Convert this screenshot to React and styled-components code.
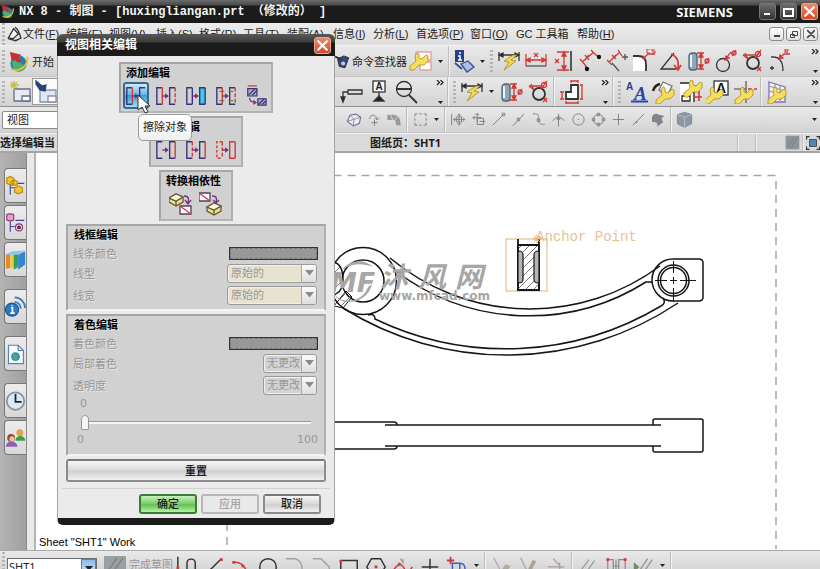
import React from "react";
import styled, { createGlobalStyle, css } from "styled-components";

const Global = createGlobalStyle`
  * { box-sizing: border-box; }
  html, body { margin: 0; padding: 0; }
  body, button, input, select {
    font-family: "Liberation Sans", "Noto Sans CJK SC", sans-serif;
    font-size: 11px;
    color: #222;
  }
  button { border: 0; background: none; padding: 0; }
`;

/* ---------- shell ---------- */

const Shell = styled.div`
  position: relative;
  display: flex;
  flex-direction: column;
  height: 100vh;
  overflow: hidden;
  background: #dcdcdc;
`;

const TitleBar = styled.header`
  flex: none;
  display: flex;
  align-items: center;
  height: 23px;
  padding-right: 2px;
  background: linear-gradient(#6a6a6a 0, #4a4a4a 5px, #1c1c1c 6px, #1a1a1a 100%);
  color: #f4f4f4;
`;

const AppTitle = styled.h1`
  flex: 1;
  margin: 0 0 0 4px;
  font: bold 12px/22px "Liberation Mono", "Noto Sans CJK SC", monospace;
  white-space: pre;
`;

const Brand = styled.span`
  font: bold 13px/22px "Noto Sans", sans-serif;
  margin-right: 22px;
`;

const WindowButton = styled.button`
  display: flex;
  align-items: center;
  justify-content: center;
  width: 17px;
  height: 17px;
  margin-left: 4px;
  border-radius: 3px;
  border: 1px solid ${(p) => (p.$danger ? "#f0a48c" : "#777")};
  background: ${(p) =>
    p.$danger ? "linear-gradient(#ea8a6c, #d24a2a)" : "linear-gradient(#6c6c6c, #343434)"};
  color: #fff;
`;

const MenuBar = styled.nav`
  flex: none;
  display: flex;
  align-items: center;
  height: 23px;
  padding: 0 2px 0 0;
  background: linear-gradient(#ececec, #dedede);
  border-bottom: 1px solid #f4f4f4;
`;

const MenuItem = styled.button`
  width: ${(p) => p.$w}px;
  line-height: 22px;
  text-align: left;
  white-space: nowrap;
`;

const Push = styled.span`
  flex: 1;
`;

const ChildButton = styled.button`
  display: flex;
  align-items: center;
  justify-content: center;
  width: 15px;
  height: 14px;
  margin-left: 2px;
  border: 1px solid #8c8c8c;
  border-radius: 3px;
  background: linear-gradient(#fdfdfd, #e2e2e2);
`;

const Toolbar = styled.div`
  flex: none;
  display: flex;
  align-items: center;
  height: ${(p) => p.$h}px;
  background: linear-gradient(#e9e9e9, #d3d3d3);
  border-bottom: 1px solid ${(p) => (p.$strong ? "#8f8f8f" : "#c6c6c6")};
  overflow: hidden;
`;

const LeadZone = styled.div`
  flex: none;
  display: flex;
  align-items: center;
  width: ${(p) => p.$w}px;
  height: 100%;
`;

const Slot = styled.button`
  flex: none;
  display: flex;
  align-items: center;
  justify-content: center;
  width: ${(p) => p.$w || 27}px;
  height: 27px;
  ${(p) =>
    p.$active &&
    css`
      background: #fbfbfb;
      border: 1px solid #9a9a9a;
    `}
`;

const TextButton = styled.button`
  flex: none;
  display: flex;
  align-items: center;
  gap: 2px;
  white-space: nowrap;
  color: ${(p) => (p.disabled ? "#979797" : "#222")};
`;

const CaretBox = styled.button`
  flex: none;
  display: flex;
  width: 12px;
  justify-content: center;
`;

const Separator = styled.span`
  flex: none;
  width: 2px;
  height: 100%;
  margin: 0 2px;
  border-left: 1px solid #bdbdbd;
  border-right: 1px solid #f2f2f2;
`;

const Grip = styled.span`
  flex: none;
  width: 3px;
  height: 22px;
  margin: 0 2px;
  background: repeating-linear-gradient(#b4b4b4 0 2px, transparent 2px 4px);
`;

const More = styled.button`
  flex: none;
  display: flex;
  flex-direction: column;
  justify-content: space-between;
  align-items: center;
  width: 10px;
  height: 24px;
  margin-left: ${(p) => (p.$end ? "auto" : "16px")};
`;

const InfoBar = styled.div`
  flex: none;
  display: flex;
  align-items: center;
  height: 20px;
  background: #dadada;
  border-top: 1px solid #f2f2f2;
  border-bottom: 2px solid #a4a4a4;
  font: bold 11px/16px "Noto Sans", "Noto Sans CJK SC", sans-serif;
  color: #1c1c1c;
`;

const ViewFilter = styled.select`
  width: 150px;
  height: 18px;
  margin-left: 2px;
  padding: 0;
  border: 1px solid #8a8a8a;
  border-radius: 2px;
  background: #fff;
`;

/* ---------- work area ---------- */

const Work = styled.main`
  flex: 1;
  min-height: 0;
  display: flex;
`;

const ResourceBar = styled.aside`
  flex: none;
  display: flex;
  flex-direction: column;
  width: 27px;
  padding: 15px 0 0 4px;
  background: linear-gradient(90deg, #b4b4b4, #a0a0a0);
  border-right: 1px solid #8a8a8a;
`;

const ResourceTab = styled.button`
  flex: none;
  display: flex;
  align-items: center;
  justify-content: center;
  height: 35px;
  margin-bottom: ${(p) => (p.$apart ? 12 : 2)}px;
  border: 1px solid #777;
  border-right: 0;
  border-radius: 4px 0 0 4px;
  background: linear-gradient(#ececec, #d8d8d8);
`;

const Gutter = styled.div`
  flex: none;
  width: 9px;
  background: #e9e9e9;
  border-right: 2px solid #b4b4b4;
`;

const Sheet = styled.section`
  position: relative;
  flex: 1;
  min-width: 0;
  overflow: hidden;
  background: #fff;
`;

const Drawing = styled.svg`
  display: block;
  width: 784px;
  height: 396px;
`;

const SheetLabel = styled.span`
  position: absolute;
  left: 3px;
  bottom: 1px;
  line-height: 14px;
  color: #000;
`;

const BottomBar = styled.footer`
  flex: none;
  display: flex;
  align-items: flex-start;
  height: 19px;
  padding-top: 1px;
  overflow: hidden;
  background: linear-gradient(#e9e9e9, #d6d6d6);
  border-top: 1px solid #a8a8a8;
`;

const SheetPicker = styled.label`
  flex: none;
  display: flex;
  width: 90px;
  height: 20px;
  margin: 6px 6px 0 0;
  border: 1px solid #6d6d6d;
  background: #fff;
`;

const SheetInput = styled.input`
  flex: 1;
  min-width: 0;
  border: 0;
  padding: 0 0 4px 1px;
  font: 11px "Noto Sans", sans-serif;
`;

const SheetArrow = styled.span`
  width: 15px;
  padding: 6px 0 0 3px;
  border: 1px solid #5784b8;
  background: linear-gradient(#8dbbe8, #d4ecfc);
  display: flex;
`;

/* ---------- dialog ---------- */

const Dialog = styled.section`
  position: absolute;
  left: 57px;
  top: 34px;
  width: 278px;
  border: 1px solid #a2a2a2;
  border-width: 0 1px;
  border-radius: 6px;
  background: #ebebeb;
  border-bottom: 7px solid #1c1c1c;
`;

const DialogHead = styled.header`
  display: flex;
  align-items: center;
  justify-content: space-between;
  height: 22px;
  margin: 0 -1px;
  padding: 0 4px 0 8px;
  border-radius: 6px 6px 0 0;
  background: linear-gradient(#585858, #3c3c3c 8px, #1b1b1b 9px);
`;

const DialogTitle = styled.h2`
  margin: 0;
  font-size: 12px;
  line-height: 20px;
  color: #fff;
`;

const DialogBody = styled.div`
  display: flex;
  flex-direction: column;
  align-items: center;
  gap: 3px;
  padding: 6px 8px 6px;
`;

const sunken = css`
  background: #d1d1d1;
  border: 2px solid;
  border-color: #a6a6a6 #b0b0b0 #b4b4b4 #a6a6a6;
`;

const ToolGroup = styled.fieldset`
  position: relative;
  margin: 0;
  min-width: ${(p) => p.$min || 0}px;
  height: 51px;
  padding: 0 2px;
  ${sunken}
`;

const GroupTitle = styled.h3`
  margin: 0;
  padding-left: ${(p) => p.$inset || 3}px;
  font-size: 11px;
  line-height: 18px;
  color: #000;
`;

const ToolRow = styled.div`
  display: flex;
  gap: 4px;
  justify-content: center;
`;

const EditTool = styled.button`
  display: flex;
  align-items: center;
  justify-content: center;
  width: 26px;
  height: 27px;
  border-radius: 3px;
  ${(p) =>
    p.$active &&
    css`
      border: 2px solid #36698f;
      background: linear-gradient(#d0e9f8, #6db8e4 45%, #3f9bd4 50%, #9be0fa);
    `}
`;

const Tooltip = styled.span`
  position: absolute;
  left: 17px;
  top: 50px;
  z-index: 2;
  padding: 0 4px;
  border: 1px solid #9c9c9c;
  border-radius: 5px;
  background: linear-gradient(#fff, #f0f0f0);
  line-height: 25px;
  white-space: nowrap;
`;

const Pointer = styled.svg`
  position: absolute;
  left: 16px;
  top: 30px;
  z-index: 3;
`;

const Panel = styled.fieldset`
  align-self: stretch;
  margin: 0;
  min-width: 0;
  padding: 0 6px ${(p) => p.$pb}px 5px;
  ${sunken}
  border-bottom-color: #f4f4f4;
`;

const PanelRow = styled.div`
  display: flex;
  align-items: center;
  justify-content: space-between;
  height: ${(p) => p.$h || 22}px;
  color: #979797;
  text-shadow: 1px 1px 0 #e4e4e4;
`;

const Swatch = styled.button`
  width: 89px;
  height: 13px;
  border: 1px solid #333;
  background: #989898;
  outline: 1px dashed #777;
  outline-offset: -2px;
`;

const Combo = styled.span`
  position: relative;
  display: flex;
  width: ${(p) => p.$w}px;
  height: 19px;
  margin-right: 1px;
  border: 1px solid #9a9a9a;
  border-radius: 3px;
  background: ${(p) => (p.$w > 60 ? "#e8e3d0" : "#d3d3d3")};
  box-shadow: inset 0 0 0 1px #efefef;
`;

const ComboSelect = styled.select`
  flex: 1;
  min-width: 0;
  appearance: none;
  border: 0;
  background: none;
  padding: 0 0 0 3px;
  color: #979797;
  opacity: 1;
`;

const ComboArrow = styled.span`
  display: flex;
  align-items: center;
  justify-content: center;
  width: 15px;
  border-left: 1px solid #aaa;
  border-radius: 0 2px 2px 0;
  background: linear-gradient(#fafafa, #dedede);
`;

const ScaleRow = styled.div`
  display: flex;
  justify-content: space-between;
  height: 16px;
  padding: 0 0 0 ${(p) => p.$inset}px;
  font: 11px/16px "DejaVu Sans", sans-serif;
  color: #979797;
`;

const Slider = styled.input`
  display: block;
  width: 230px;
  height: 20px;
  margin: 0 0 0 8px;
  appearance: none;
  background: linear-gradient(transparent 9px, #999 9px 10px, #f6f6f6 10px 12px, transparent 12px);
  &::-webkit-slider-thumb {
    appearance: none;
    width: 8px;
    height: 15px;
    border: 1px solid #999;
    border-radius: 4px 4px 1px 1px;
    background: #f6f6f6;
  }
`;

const PushButton = styled.button`
  width: ${(p) => (p.$wide ? "100%" : "58px")};
  height: ${(p) => (p.$wide ? 23 : 20)}px;
  border: 2px solid #8c8c8c;
  border-color: #777 #8c8c8c #8c8c8c;
  border-radius: 3px;
  background: linear-gradient(#f6f6f6, #dcdcdc 45%, #d0d0d0 55%, #f0f0f0);
  color: #222;
  font-weight: ${(p) => (p.$wide ? "bold" : "500")};
  line-height: 14px;
  ${(p) =>
    p.$primary &&
    css`
      border-color: #3c7a35;
      background: linear-gradient(#c8f0bc, #7fd070 45%, #62c052 55%, #b4f4a4);
    `}
  &:disabled {
    border-color: #b8b8b8;
    color: #a4a4a4;
    background: #e9e9e9;
  }
`;

const DialogFoot = styled.footer`
  display: flex;
  justify-content: flex-end;
  gap: 4px;
  margin: 0 4px;
  padding: 5px 9px 4px 0;
  border-top: 1px solid #d2d2d2;
`;

/* ---------- icons ---------- */

const RED = "#d03a36";
const BLUE = "#35357e";

const Ico = ({ s = 24, children, ...rest }) => (
  <svg width={s} height={s} viewBox="0 0 24 24" fill="none" stroke="#333" strokeWidth="1.3" {...rest}>
    {children}
  </svg>
);

const Caret = ({ c = "#222", w = 5 }) => (
  <svg width={w} height={w * 0.6} viewBox="0 0 10 6"><path d="M0 0h10L5 6z" fill={c} /></svg>
);

const CaretButton = () => <CaretBox aria-label="更多"><Caret /></CaretBox>;

const MoreTools = ({ end }) => (
  <More $end={end} aria-label="更多工具">
    <svg width="8" height="6" viewBox="0 0 8 6" fill="none" stroke="#222" strokeWidth="1.2"><path d="M1 0l2.500 2.500L1 5M4.500 0L7 2.500 4.500 5" /></svg>
    <Caret />
  </More>
);

const Wrench = ({ x = 0, y = 0 }) => (
  <path
    transform={`translate(${x} ${y})`}
    d="M0 14l6-5-1-5 2-3 2 1v4l3 1 4-4 2 1v5l-4 4H9l-5 5H0z"
    fill="#f4de5c" stroke="#a68a2c" strokeWidth="0.8"
  />
);

const NxLogo = ({ s = 24 }) => (
  <Ico s={s} stroke="none">
    <circle cx="12" cy="14" r="8.500" fill="#2b7fae" />
    <path d="M5 12c4-2 9 0 14 7-3 4-9 5-12 1z" fill="#4cb070" />
    <path d="M4 20C14 24 23 15 21 7" stroke="#e9bf38" strokeWidth="2" fill="none" />
    <path d="M3 2l12 3-3 2 3 5-4 1-3-4-3 3z" fill="#c9302c" />
  </Ico>
);

const Bolt = () => (
  <Ico>
    <path d="M2 3v9M22 3v9M2 6h20" />
    <path d="M2 6l4-2v4zM22 6l-4-2v4z" fill="#222" />
    <path d="M16 6L7 12l5 1-5 8 12-9-5-1 6-5z" fill="#f4dc4e" stroke="#a08828" strokeWidth="0.800" />
  </Ico>
);

const HDim = () => (
  <Ico stroke={RED}>
    <path d="M2 5v12M22 5v12M2 11h20M10 4l4 4M14 4l-4 4" />
    <path d="M2 11l4-2v4zM22 11l-4-2v4z" fill={RED} />
    <path d="M2 17h20" stroke="#555" />
  </Ico>
);

const VDim = () => (
  <Ico stroke={RED}>
    <path d="M6 3h12M6 21h12M13 3v18M4 10l4 4M8 10l-4 4" />
    <path d="M13 3l-2 4h4zM13 21l-2-4h4z" fill={RED} />
    <path d="M20 2v20" stroke="#555" strokeWidth="2" />
  </Ico>
);

const ParallelDim = () => (
  <Ico stroke={RED}>
    <path d="M4 13L16 3M2 10l6 7M13 1l6 6M7 6l4 5M11 6l-4 5" />
    <path d="M8 17v4M19 7h2" stroke="#333" />
    <circle cx="9" cy="20" r="1.500" fill="#111" stroke="#111" /><circle cx="21" cy="8" r="1.500" fill="#111" stroke="#111" />
  </Ico>
);

const PerpDim = () => (
  <Ico stroke={RED}>
    <path d="M4 13L15 3M2 11l5 5M13 1l4 6M7 6l4 4M11 6l-4 4" />
    <path d="M20 5v6M17 8h6M7 14l7 8" stroke="#555" />
  </Ico>
);

const ChamferDim = () => (
  <Ico>
    <path d="M1 7h7c4 1 6 4 6 8v7H1z" fill="#fff" stroke="none" />
    <path d="M1 7h5c5 0 8 3 8 8v7" strokeWidth="1.800" />
    <path d="M11 10l5-5h7" stroke={RED} /><path d="M10 10l1-4 3 3z" fill={RED} stroke="none" />
    <path d="M18 0h-3v4h3M23 0h-3v2h3v2h-3" stroke={RED} strokeWidth="1" />
  </Ico>
);

const AngleDim = () => (
  <Ico><path d="M15 4L2 20h15" /><path d="M12 5c6 2 8 8 7 15M15 16l4 5 3-5" stroke={RED} strokeWidth="1.600" /></Ico>
);

const CylinderDim = () => (
  <Ico>
    <rect x="3" y="4" width="8" height="17" rx="3" fill="#8ca8b8" stroke="#4d6576" />
    <path d="M5 6v12" stroke="#e8f4fa" strokeWidth="2" />
    <g stroke={RED}><path d="M11 4h7M11 20h7M15 4v16" /><path d="M15 4l-2 4h4zM15 20l-2-4h4z" fill={RED} /><circle cx="21" cy="12" r="2" /><path d="M19 15l4-6" /></g>
  </Ico>
);

const HoleDim = () => (
  <Ico><circle cx="10" cy="16" r="6.500" /><g stroke={RED}><path d="M13 10l4-6h3M12 11l1-4 3 2z" /><circle cx="21" cy="4" r="2" /><path d="M19 7l4-6" /></g></Ico>
);

const DiameterDim = () => (
  <Ico><circle cx="13" cy="14" r="6" strokeWidth="1.800" /><g stroke={RED}><path d="M3 6h12M3 6l5 4M18 18l3 4M5 4l3 6M17 22l4-4" /><circle cx="18" cy="5" r="2.500" /><path d="M15 9l6-8" /></g></Ico>
);

const RadiusDim = () => (
  <Ico><path d="M4 8c8-1 12 4 12 14M3 19h4M5 17v4" /><path d="M12 10l5-5h6M12 10l1-4 3 3z" stroke={RED} /><path d="M18 4V0h3v2h-3l3 2" stroke={RED} strokeWidth="1" /></Ico>
);

const FormatTool = () => (
  <Ico><rect x="7" y="3" width="15" height="8" fill="#fff" stroke="#e59a96" /><rect x="11" y="13" width="11" height="8" fill="#fff" stroke="#e59a96" /><Wrench x="1" y="3" /></Ico>
);

const InfoTool = () => (
  <Ico><rect x="3" y="1" width="9" height="12" fill="#283f8e" stroke="none" /><path d="M7 4h2M6 7h2v4M6 11h4" stroke="#fff" strokeWidth="1.500" /><path d="M9 15l7-3 6 6-7 5z" fill="#a9bfe4" stroke="#3b4e8c" /><path d="M3 14l7 6" stroke="#3b4e8c" strokeWidth="2" /></Ico>
);

const Finder = () => (
  <Ico s={15}><path d="M4 8l10-5 8 3-6 16-9-2z" fill="#35447c" stroke="#222" /><circle cx="13" cy="15" r="4" fill="#b8cce8" /><path d="M0 4l9 4" stroke="#222" strokeWidth="3" /></Ico>
);

const Leader = () => <Ico><path d="M3 20v-8h5M8 10h14v4H8z" /><path d="M3 22l-2-5h4z" fill="#222" /></Ico>;

const Datum = () => (
  <Ico><rect x="6" y="1" width="12" height="11" fill="#f8f8f8" /><path d="M12 12v7" /><path d="M7 21l5-5 5 5z" fill="#222" /><text x="8.500" y="10" fontSize="10" fontWeight="bold" fill="#222" stroke="none">A</text></Ico>
);

const Lens = () => <Ico><circle cx="10" cy="9" r="7.500" /><path d="M3 9h14M15 15l8 8" strokeWidth="1.800" /></Ico>;

const Outline = () => (
  <Ico><path d="M7 19v-7h5V5h7v14z" fill="#fff" strokeWidth="1.800" /><path d="M12 1h7M12 0v3M19 0v3M23 5v14M21 5h3M21 19h3M7 23h12M7 21v3M19 21v3M3 12v7M1 12h4M1 19h4" stroke={RED} /></Ico>
);

const TextStyle = () => (
  <Ico><text x="1" y="10" fontSize="10" fontWeight="bold" fill="#343a84" stroke="none">A</text><text x="9" y="20" fontSize="19" fontWeight="bold" fontStyle="italic" fontFamily="Liberation Serif" fill="#2247b0" stroke="none">A</text><path d="M6 21.500h17" stroke="#2247b0" strokeWidth="2" /></Ico>
);

const EditAnnot = () => <Ico><path d="M7 10l4-8 9 4-5 10z" fill="#f8f8f8" stroke="#777" /><path d="M1 11c1-4 3-6 7-7" strokeWidth="2.500" stroke="#222" /><Wrench x="4" y="6" /></Ico>;
const EditDim = () => <Ico><rect x="1" y="3" width="13" height="19" fill="#fff" stroke="none" /><path d="M1 3h12M3 16h8v5H3zM15 12v10" stroke="#222" /><path d="M15 6h8M15 17h8M20 3v18" stroke={RED} strokeWidth="1.600" /><Wrench x="5" y="-1" /></Ico>;
const EditText = () => <Ico><rect x="8" y="1" width="14" height="14" fill="#fff" /><text x="10" y="13" fontSize="14" fontWeight="bold" fill="#111" stroke="none">A</text><Wrench x="-1" y="6" /></Ico>;
const EditAxis = () => <Ico><path d="M13 1v22M1 9h13" stroke="#777" strokeWidth="1.600" /><path d="M15 9h4M21 9h3" stroke={RED} /><Wrench x="2" y="6" /></Ico>;
const EditHatch = () => <Ico><path d="M3 2l16 5v15H3z" fill="#f2f2f2" stroke="#8a6cb8" /><path d="M3 6l16 5M3 11l16 5M9 4v18M14 5v16" stroke="#999" /><Wrench x="2" y="6" /></Ico>;

const SheetNew = () => <Ico><path d="M6 9h16v12H6z" fill="#e8ebf3" stroke="#686c88" /><path d="M14 16h8v5h-8z" fill="#fff" stroke="#686c88" /><path d="M6 1v9M2 5h9M3 2l6 6M9 2l-6 6" stroke="#c4be4c" /></Ico>;
const Torch = () => <Ico><path d="M6 10h16v12H6z" fill="#dfe6f4" stroke="#8c90ac" /><path d="M14 16h8v6h-8z" fill="#fff" stroke="#8c90ac" /><path d="M2 1l6 5 4-1-1 6-5-1-4-6z" fill="#29427c" stroke="#29427c" /></Ico>;
const Sketcher = () => <Ico s={16}><path d="M2 18l8-14 7 8-8 7z" fill="#f4f4f4" strokeWidth="2" /><path d="M12 2c5 2 6 8 9 16l-8 4-11-3" strokeWidth="2" /></Ico>;

/* stroke-only glyphs used by the snap toolbar */
const GLYPHS = {
  sphere: "M3 12a8 8 0 0 0 9 7M12 5v14M3 12h9",
  rotate: "M4 11c2-8 10-8 12 0M13 9l3 4 4-4M12 12v10M7 17h10",
  bend: "M2 4h10c7 1 8 7 8 14h-6c0-5-1-7-4-7H2zM8 4v7M12 11l4-5",
  marquee: "M3 3h4M10 3h4M17 3h4M3 21h4M10 21h4M17 21h4M3 3v4M3 10v4M3 17v4M21 3v4M21 10v4M21 17v4",
  move: "M13 3v18M4 12h18M10 6l3-3 3 3M10 18l3 3 3-3M7 9l-3 3 3 3M19 9l3 3-3 3M9 8h8v8H9zM1 3v18",
  turn: "M10 2v14M3 9h14M10 10h10v10H10zM7 5l3-3 3 3M6 6L3 9l3 3M14 15h9",
  end: "M3 21L20 4M18 2h4v4h-4z",
  mid: "M3 22L21 3M10 10h4v4h-4z",
  curve: "M3 3c12-1 8 4 9 10s4 7 10 7M10 11h4v4h-4z",
  cross: "M3 14c4-7 14-7 18 0M12 3v20M10 8h4v4h-4z",
  center: "M3 12a9 9 0 1 0 18 0a9 9 0 1 0-18 0M11 12h2",
  quad: "M4 12a8 8 0 1 0 16 0a8 8 0 1 0-16 0M10 2h4v4h-4zM10 18h4v4h-4zM2 10h4v4H2zM18 10h4v4h-4z",
  plus: "M12 3v18M3 12h18",
  slash: "M3 21L21 3M7 17l4-1",
};
const Glyph = ({ n, s = 15, c = "#858585" }) => <Ico s={s} stroke={c} strokeWidth="1.600"><path d={GLYPHS[n]} /></Ico>;
const SNAP = ["move", "turn", "end", "mid", "curve", "cross", "center", "quad", "plus", "slash"];

const Face = () => <Ico s={16} stroke="none"><path d="M3 8c2-6 7-6 10-4l9 2c-6 3-5 6-2 9l-9 7c1-5-1-7-8-7z" fill="#80868c" /></Ico>;
const Solid = () => <Ico s={17}><path d="M2 5l10-3 10 3v13l-10 5-10-5z" fill="#8c98a4" stroke="#7a8692" /><path d="M2 5l10 4 10-4M12 9v14" stroke="#b8c2cc" /></Ico>;
const Gem = () => <Ico s={16}><path d="M2 14l4-9 9-2 7 5-2 9-9 4z" fill="#ececf6" stroke="#6a6e96" strokeWidth="1.600" /><path d="M2 14l10-3 10-3M12 11l-1 10M6 5l6 6" stroke="#9a7a98" /></Ico>;
const Bend = () => <Ico s={16} stroke="none"><path d="M2 4h10c7 1 10 6 10 16h-7c0-6-1-8-4-8H2z" fill="#999" /><path d="M7 4l3 8M13 12l6-6" stroke="#ddd" /></Ico>;

const Pair = ({ l = BLUE, lr = BLUE, r = BLUE, rr = BLUE, ld, rd, lopen, ropen, fill, ticks }) => (
  <Ico s={22} strokeWidth="1.500">
    <path d="M8 3H2v18h6" stroke={l} strokeDasharray={ld === "all" ? "3 2" : undefined} />
    {!lopen && <path d="M8 3v18" stroke={lr} strokeDasharray={ld ? "4 2" : undefined} />}
    <path d="M22 3h-6v18h6" stroke={r} fill={fill || "none"} />
    {!ropen && <path d="M22 3v18" stroke={rr} strokeDasharray={rd ? "4 2" : undefined} />}
    <path d="M8 12h6" stroke="#7b2d80" /><path d="M11 9l4 3-4 3z" fill="#7b2d80" stroke="none" />
    {ticks && <path d="M5 7h5M5 17h5M17 7h3M17 17h3" stroke="#6d7a44" />}
  </Ico>
);

const SectionEdit = () => (
  <Ico s={22}><path d="M3 1h10" stroke={RED} /><path d="M3 4h10v8H3z" fill="#aaa9bd" stroke={BLUE} /><path d="M4 11l7-7M8 11l5-5" stroke={BLUE} /><path d="M14 15h9v7h-9z" fill="#aaa9bd" stroke={BLUE} /><path d="M15 21l6-6M19 21l4-4" stroke={BLUE} /><path d="M5 14c0 4 2 5 6 5M9 17l3 2-3 2" stroke="#7b2d80" /></Ico>
);

const Block = ({ x, y }) => (
  <g transform={`translate(${x} ${y})`} stroke="#665b30"><path d="M0 4l7-4 7 3v5l-7 4-7-4z" fill="#e8dd8a" /><path d="M0 4l7 3 7-4M7 7v5" /><path d="M0 4l7-4 7 3-7 4z" fill="#fbf8e4" /></g>
);
const Flat = ({ x, y }) => <g transform={`translate(${x} ${y})`}><path d="M0 0h11v8H0z" fill="#fff" stroke="#504058" /><path d="M0 0l11 8" stroke={RED} /></g>;
const ModelToView = () => <Ico><Block x={0} y={2} /><Flat x={11} y={14} /><path d="M15 4c5 0 5 3 4 7M16 8l3 4 3-4" stroke="#7b2d80" /></Ico>;
const ViewToModel = () => <Ico><Flat x={0} y={1} /><Block x={8} y={11} /><path d="M13 4c5 0 5 3 4 6M14 8l3 3 3-3" stroke="#7b2d80" /></Ico>;

const Tree = () => <Ico s={22}><path d="M6 10v12M6 14h5M12 9h10" stroke="#43439a" /><path d="M2 3l4-2 4 2v6l-4 2-4-2zM11 14l5-2 4 2v5l-5 2-4-2zM7 7l4-2 3 2v4H7z" fill="#f0c330" stroke="#b98a1c" /></Ico>;
const Parts = () => <Ico s={22}><path d="M6 10v12M6 16h5M12 9h10" stroke="#43439a" /><path d="M2 3c0-2 8-2 8 0v5c0 2-8 2-8 0z" fill="#d9a7cc" stroke="#9a2f7c" /><circle cx="16" cy="17" r="4" stroke="#9a2f7c" /><circle cx="16" cy="17" r="1.500" fill="#9a2f7c" /></Ico>;
const Books = () => <Ico s={22} stroke="none"><path d="M1 6l5-3v18l-5 1z" fill="#e8862c" /><path d="M6 5l5-3v18l-5 2z" fill="#f0c848" /><path d="M10 6l5-3v17l-5 3z" fill="#32a052" /><path d="M15 6l8-4v15l-8 6z" fill="#3286d0" /><path d="M1 6l7-4 15-1-8 5z" fill="#8cc8ec" /></Ico>;
const Web = () => <Ico s={22}><circle cx="8" cy="15" r="7.500" fill="#2c7cc0" stroke="#195890" /><path d="M8 10v1M7 13h1.500v6M6 19h5" stroke="#fff" strokeWidth="2" /><path d="M11 6c4 0 7 4 7 8M11 1c7 0 12 6 12 12" stroke="#3a78b4" strokeWidth="2" /></Ico>;
const Page = () => <Ico s={22}><path d="M4 2h11l6 6v15H4z" fill="#f8fafc" stroke="#5484b0" /><path d="M15 2v6h6" stroke="#5484b0" /><circle cx="12" cy="15" r="5" fill="#368cb8" stroke="none" /><path d="M9 12l5 1-1 6-3-2z" fill="#54b068" stroke="none" /></Ico>;
const Clock = () => <Ico s={22}><circle cx="12" cy="12" r="10" fill="#dce8f4" stroke="#8a929c" strokeWidth="2" /><path d="M12 4v9h7" stroke="#222" strokeWidth="2" /></Ico>;
const People = () => <Ico s={22} stroke="none"><path d="M12 15c0-7 11-7 11 0z" fill="#3a9a4c" /><circle cx="17" cy="6" r="4" fill="#e3a444" /><path d="M1 22c0-8 13-8 13 0z" fill="#8a60b8" /><circle cx="7" cy="12" r="4.500" fill="#8a4c3c" /><circle cx="8" cy="13" r="3" fill="#f0bf90" /></Ico>;

const CloseX = ({ s = 11, c = "#fff", w = 2 }) => (
  <svg width={s} height={s} viewBox="0 0 12 12"><path d="M2 2l8 8M10 2l-8 8" stroke={c} strokeWidth={w} strokeLinecap="round" /></svg>
);

const Node = ({ x, y }) => <rect x={x - 1.5} y={y - 1.5} width="3" height="3" fill={RED} stroke="none" />;
const SK = {
  profile: <><path d="M2 2v20M12 20V9c0-6 9-6 9 0v11" strokeWidth="1.600" /><Node x={2} y={14} /><Node x={12} y={20} /><Node x={21} y={20} /></>,
  line: <><path d="M2 22L20 4" strokeWidth="1.600" /><Node x={20} y={5} /></>,
  arc: <><path d="M4 8c7-1 12 3 15 12" stroke={RED} strokeWidth="1.600" /><Node x={4} y={8} /><Node x={14} y={12} /></>,
  circle: <circle cx="12" cy="13" r="9" strokeWidth="1.600" />,
  fillet: <path d="M2 4h9c8 1 9 7 9 18" stroke="#a4a4a4" strokeWidth="1.600" />,
  chamfer: <path d="M2 4h9l9 9v9" stroke="#a4a4a4" strokeWidth="1.600" />,
  rect: <><path d="M3 6h18v14H3z" strokeWidth="1.600" /><Node x={3} y={7} /></>,
  hex: <><path d="M7 4h10l5 9-5 9H7l-5-9z" strokeWidth="1.600" /><Node x={12} y={13} /></>,
  spline: <><path d="M2 16c6-9 10-5 12 0s6 1 8-3" stroke={RED} strokeWidth="1.600" /><path d="M9 4l3 4M12 4v6" stroke="#999" /><Node x={8} y={10} /></>,
  point: <path d="M12 4v18M3 13h18" strokeWidth="1.600" />,
  add: <><path d="M5 2v8M1 6h8" stroke={RED} strokeWidth="2" /><path d="M7 9h8v10H7zM15 9c5 0 6 3 6 11" stroke="#3c62b8" strokeWidth="1.600" /></>,
  trim: <><path d="M3 3l9 17" stroke="#aaa" /><path d="M11 17l5-7 5 2-5 9z" fill="#b0aa9c" stroke="none" /></>,
  extend: <><path d="M3 3l8 17" stroke="#aaa" strokeWidth="1.600" /><path d="M11 20l7-14" stroke="#aaa494" strokeWidth="4" /></>,
  corner: <path d="M3 13h18M9 4l9 10M16 8v14" stroke="#b09c9c" />,
  parallel: <path d="M3 17l9-12M9 19l9-13M18 16v6" stroke="#999" />,
  auto: <><path d="M3 5h6v13M3 5v17M15 18V5h7v17M9 12h6M12 5v12" stroke="#888" /><Node x={3} y={5} /><Node x={22} y={5} /></>,
  show: <><path d="M2 8l6 5-6 6z" fill="#6c8c6c" stroke="none" /><path d="M9 16l8-12M14 17l8-12" stroke="#999" strokeWidth="1.600" /></>,
};
const Sk = ({ n }) => <Slot aria-label={n}><Ico s={22}>{SK[n]}</Ico></Slot>;

/* ---------- data ---------- */

const MENUS = [
  ["文件", "F", 43], ["编辑", "E", 43], ["视图", "V", 47], ["插入", "S", 43], ["格式", "R", 44],
  ["工具", "T", 44], ["装配", "A", 46], ["信息", "I", 40], ["分析", "L", 43], ["首选项", "P", 54],
  ["窗口", "O", 46], ["GC 工具箱", "", 61], ["帮助", "H", 40],
];

const ROW1 = [Bolt, HDim, VDim, ParallelDim, PerpDim, ChamferDim, AngleDim, CylinderDim, HoleDim, DiameterDim, RadiusDim];
const ROW2 = [TextStyle, EditAnnot, EditDim, EditText, EditAxis];
const TABS = [[Tree], [Parts], [Books, true], [Web, true], [Page, true], [Clock], [People]];

const tools = (list) => list.map((I, i) => <Slot key={i}><I /></Slot>);

const ComboBox = ({ id, value, w }) => (
  <Combo $w={w}>
    <ComboSelect id={id} disabled defaultValue={value}><option>{value}</option></ComboSelect>
    <ComboArrow><Caret c="#8a8a8a" w={9} /></ComboArrow>
  </Combo>
);

/* ---------- part drawing ---------- */

const PartDrawing = () => (
  <Drawing viewBox="36 154 784 396" fill="none" stroke="#161616" strokeWidth="1.500">
    <defs>
      <pattern id="hatch" width="8" height="8" patternUnits="userSpaceOnUse">
        <path d="M-2 10L10-2M-2 2L2-2M6 10l4-4" stroke="#777" strokeWidth="1" />
      </pattern>
    </defs>
    <path d="M227 560V176.500H776V560" stroke="#a6a6a6" strokeDasharray="8 6" />

    <circle cx="363" cy="282" r="33.500" />
    <circle cx="363" cy="282" r="21" />
    <path d="M330 262c9 1 13 7 13 18s-4 14-13 18z" fill="url(#hatch)" />
    <path d="M334 307l12-15 6 6-9 11z" fill="url(#hatch)" strokeWidth="1" />
    <path d="M390 259A218 218 0 0 0 660 267M397 273A220 220 0 0 0 646 283h7" />
    <path d="M368 316c6-2 7 2 7 4A302 302 0 0 0 661 307c4-2 4-5 2-8M343 309A308 308 0 0 0 678 304" />
    <path d="M673 260h26q4 0 4 4v34q0 4-4 4h-26A21 21 0 0 1 673 260z" />
    <circle cx="673.500" cy="281.500" r="15.500" /><circle cx="673.500" cy="281.500" r="13" />
    <path d="M655 281.500h12M670 281.500h7M680 281.500h16M673.500 262v12M673.500 278v7M673.500 289v14" strokeWidth="1" />

    <path d="M330 423h64q3 0 3 3M330 450h64q3 0 3-3M385 426h276M385 447h276" />
    <path d="M653 426v-4q0-2 2-2h46q2 0 2 2v29q0 2-2 2h-46q-2 0-2-2v-4" />

    <rect x="506" y="240" width="41" height="52" stroke="#e6b277" strokeWidth="1" />
    <path d="M518 246h21v45h-21z" fill="url(#hatch)" />
    <path d="M518 240v51h21v-51M518 246h21" strokeWidth="1.800" />
    <path d="M518 252c4 0 5 1 5 4v24c0 3-1 4-5 4zM539 252c-4 0-5 1-5 4v24c0 3 1 4 5 4z" fill="#b4b4b4" strokeWidth="1.200" />
    <path d="M533 240h9M537 236v8M534 237l6 6M540 237l-6 6" stroke="#eaa95c" strokeWidth="1" />
    <text x="536" y="242" fontFamily="Liberation Mono" fontSize="14" fill="#e2c394" stroke="none">Anchor Point</text>

    <g fill="#a6a6a6" stroke="none">
      <text x="330" y="293" fontFamily="DejaVu Sans" fontSize="27" fontWeight="bold" fontStyle="italic">MF</text>
      <path d="M334 294c8 13 29 9 34-6l4-3c-4 20-33 24-38 9z" />
      <path d="M342 271c7-10 22-12 31-3-11-4-20-4-31 3z" />
      <text x="380 418 455" y="288" fontFamily="Noto Sans CJK SC" fontSize="28" fontWeight="bold" fontStyle="italic">沐风网</text>
      <text x="379" y="301" fontFamily="DejaVu Sans" fontSize="12" fontWeight="bold">www.mfcad.com</text>
    </g>
  </Drawing>
);

/* ---------- dialog ---------- */

const EditDialog = () => (
  <Dialog role="dialog" aria-labelledby="dlg-title">
    <DialogHead>
      <DialogTitle id="dlg-title">视图相关编辑</DialogTitle>
      <WindowButton $danger aria-label="关闭"><CloseX s={13} /></WindowButton>
    </DialogHead>
    <DialogBody>
      <ToolGroup>
        <GroupTitle>添加编辑</GroupTitle>
        <ToolRow>
          <EditTool $active aria-label="擦除对象"><Pair lr={RED} ropen /></EditTool>
          <EditTool><Pair lr={RED} rr={RED} rd /></EditTool>
          <EditTool><Pair fill="#36cdec" /></EditTool>
          <EditTool><Pair lr={RED} rr={RED} rd ticks /></EditTool>
          <EditTool><SectionEdit /></EditTool>
        </ToolRow>
        <Pointer width="13" height="20" viewBox="0 0 13 20"><path d="M1 1v15l4-3 3 6 3-1-3-6h5z" fill="#fff" stroke="#333" /></Pointer>
        <Tooltip role="tooltip">擦除对象</Tooltip>
      </ToolGroup>
      <ToolGroup>
        <GroupTitle>删除编辑</GroupTitle>
        <ToolRow>
          <EditTool><Pair lopen rr={RED} /></EditTool>
          <EditTool><Pair lr={RED} ld="right" rr={RED} /></EditTool>
          <EditTool><Pair l={RED} lr={RED} ld="all" r={RED} rr={RED} /></EditTool>
        </ToolRow>
      </ToolGroup>
      <ToolGroup $min={74}>
        <GroupTitle>转换相依性</GroupTitle>
        <ToolRow>
          <EditTool><ModelToView /></EditTool>
          <EditTool><ViewToModel /></EditTool>
        </ToolRow>
      </ToolGroup>

      <Panel $pb={3}>
        <PanelRow $h={18}><GroupTitle $inset={1}>线框编辑</GroupTitle></PanelRow>
        <PanelRow $h={18}>线条颜色<Swatch disabled aria-label="线条颜色" /></PanelRow>
        <PanelRow><label htmlFor="ltype">线型</label><ComboBox id="ltype" value="原始的" w={90} /></PanelRow>
        <PanelRow><label htmlFor="lwidth">线宽</label><ComboBox id="lwidth" value="原始的" w={90} /></PanelRow>
      </Panel>

      <Panel $pb={6}>
        <PanelRow $h={18}><GroupTitle $inset={1}>着色编辑</GroupTitle></PanelRow>
        <PanelRow $h={18}>着色颜色<Swatch disabled aria-label="着色颜色" /></PanelRow>
        <PanelRow><label htmlFor="shade">局部着色</label><ComboBox id="shade" value="无更改" w={54} /></PanelRow>
        <PanelRow><label htmlFor="alpha">透明度</label><ComboBox id="alpha" value="无更改" w={54} /></PanelRow>
        <ScaleRow $inset={7}><span>0</span></ScaleRow>
        <Slider type="range" min="0" max="100" defaultValue="0" disabled aria-label="透明度" />
        <ScaleRow $inset={4}><span>0</span><span>100</span></ScaleRow>
      </Panel>

      <PushButton $wide>重置</PushButton>
    </DialogBody>
    <DialogFoot>
      <PushButton $primary>确定</PushButton>
      <PushButton disabled>应用</PushButton>
      <PushButton>取消</PushButton>
    </DialogFoot>
  </Dialog>
);

export default function App() {
  return (
    <Shell>
      <Global />
      <TitleBar>
        <NxLogo s={15} />
        <AppTitle>{"NX 8 - 制图 - [huxingliangan.prt （修改的） ]"}</AppTitle>
        <Brand>SIEMENS</Brand>
        <WindowButton aria-label="最小化"><svg width="9" height="9"><path d="M1 6h6v2H1z" fill="#fff" /></svg></WindowButton>
        <WindowButton aria-label="最大化"><svg width="11" height="10"><path d="M1 2h9v7H1z" fill="none" stroke="#fff" strokeWidth="2" /></svg></WindowButton>
        <WindowButton $danger aria-label="关闭"><CloseX s={13} /></WindowButton>
      </TitleBar>

      <MenuBar>
        <Grip /><Sketcher />
        {MENUS.map(([t, k, w]) => (
          <MenuItem key={t} $w={w}>{t}{k && <>(<u>{k}</u>)</>}</MenuItem>
        ))}
        <Push />
        <ChildButton aria-label="最小化窗口"><svg width="8" height="8"><path d="M1 6h6" stroke="#444" strokeWidth="2" /></svg></ChildButton>
        <ChildButton aria-label="还原窗口"><svg width="10" height="9" fill="none" stroke="#444"><path d="M3.500 1.500h5v4h-5zM1.500 4.500h4v3h-4z" /></svg></ChildButton>
        <ChildButton aria-label="关闭窗口"><CloseX s={10} c="#444" /></ChildButton>
      </MenuBar>

      <Toolbar $h={31}>
        <LeadZone $w={335}>
          <Grip />
          <TextButton><NxLogo s={23} />开始</TextButton>
          <CaretButton />
        </LeadZone>
        <TextButton><Finder />命令查找器</TextButton>
        <Slot><FormatTool /></Slot>
        <CaretButton />
        <Separator />
        <Slot $w={24}><InfoTool /></Slot>
        <CaretButton />
        <Grip />
        {tools(ROW1)}
        <MoreTools end />
      </Toolbar>

      <Toolbar $h={30} $strong>
        <LeadZone $w={338}>
          <Grip />
          <Slot $w={25}><SheetNew /></Slot>
          <Slot $active><Torch /></Slot>
        </LeadZone>
        {tools([Leader, Datum, Lens])}
        <MoreTools />
        <Separator /><Grip />
        <Slot><Bolt /></Slot>
        <CaretButton />
        {tools([CylinderDim, DiameterDim])}
        <Separator />
        <Slot><Outline /></Slot>
        <MoreTools />
        <Separator /><Grip />
        {tools(ROW2)}
        <Separator />
        <Slot><EditHatch /></Slot>
        <MoreTools end />
      </Toolbar>

      <Toolbar $h={26}>
        <LeadZone $w={324}>
          <ViewFilter aria-label="视图过滤器"><option>视图</option></ViewFilter>
        </LeadZone>
        <Slot $w={20}><Glyph n="sphere" /></Slot>
        <Slot $w={20}><Gem /></Slot>
        <Slot $w={20}><Glyph n="rotate" /></Slot>
        <Slot $w={20}><Bend /></Slot>
        <Separator />
        <Slot $w={20}><Glyph n="marquee" /></Slot>
        <CaretButton />
        <Separator />
        {SNAP.map((n) => <Slot key={n} $w={20}><Glyph n={n} /></Slot>)}
        <Slot $w={20}><Face /></Slot>
        <Separator />
        <Slot $w={20}><Solid /></Slot>
        <Push />
        <CaretButton />
      </Toolbar>

      <InfoBar>
        <LeadZone $w={370}>选择编辑当</LeadZone>
        <span>图纸页：SHT1</span>
        <Push />
        <Separator /><LeadZone $w={12} /><Separator /><LeadZone $w={26} />
        <Ico s={15}><path d="M1 1h22v22H1z" fill="#8e9599" stroke="none" /><path d="M4 20L14 4M10 20L20 4" stroke="#737b80" /></Ico>
        <Separator />
        <Ico s={14}><path d="M6 6h12v12H6z" fill="#4f88b8" stroke="#333" /><path d="M1 6V1h5M18 1h5v5M23 18v5h-5M6 23H1v-5" strokeWidth="2" /></Ico>
      </InfoBar>

      <Work>
        <ResourceBar>
          {TABS.map(([I, apart], i) => <ResourceTab key={i} $apart={apart}><I /></ResourceTab>)}
        </ResourceBar>
        <Gutter />
        <Sheet>
          <PartDrawing />
          <SheetLabel>Sheet "SHT1" Work</SheetLabel>
        </Sheet>
      </Work>

      <BottomBar>
        <Grip />
        <SheetPicker>
          <SheetInput defaultValue="SHT1" aria-label="图纸页" />
          <SheetArrow><Caret w={8} /></SheetArrow>
        </SheetPicker>
        <TextButton disabled>
          <Ico s={24}><path d="M1 4h22v20H1z" fill="#9a9fa2" stroke="none" /><path d="M4 20L14 6M10 20L20 6" stroke="#7b8387" /></Ico>
          完成草图
        </TextButton>
        <Sk n="profile" /><Sk n="line" /><Sk n="arc" /><Sk n="circle" /><Sk n="fillet" /><Sk n="chamfer" />
        <Sk n="rect" /><Sk n="hex" /><Sk n="spline" /><Sk n="point" /><Sk n="add" />
        <Slot $w={12}><Caret /></Slot>
        <Separator />
        <Sk n="trim" /><Sk n="extend" /><Sk n="corner" />
        <Separator />
        <Sk n="parallel" /><Sk n="auto" /><Sk n="show" />
        <Slot $w={12}><Caret /></Slot>
        <Separator />
      </BottomBar>

      <EditDialog />
    </Shell>
  );
}
